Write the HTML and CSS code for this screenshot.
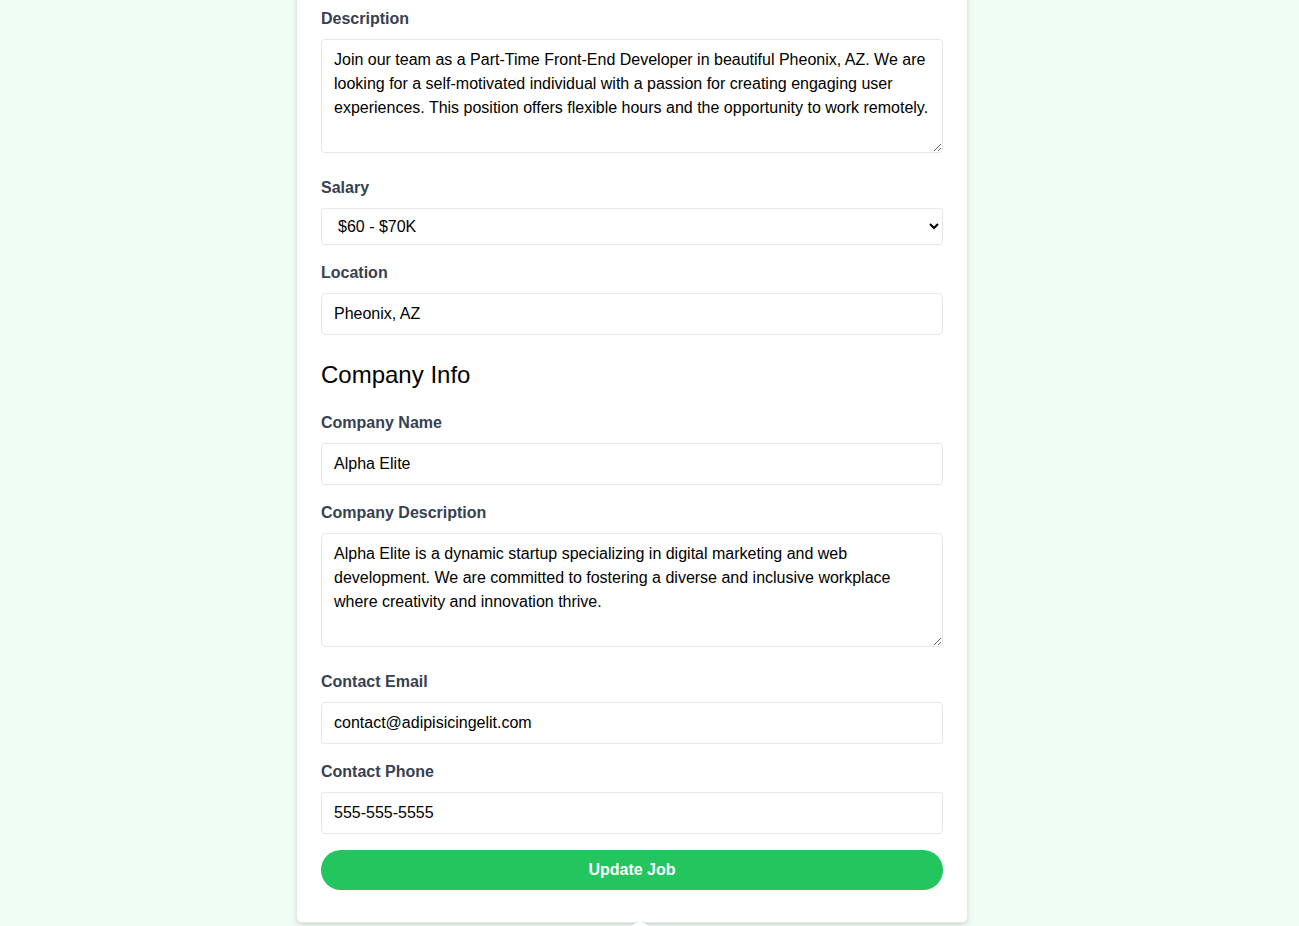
FILE: index.html
```html
<!DOCTYPE html>
<html lang="en">
<head>
<meta charset="utf-8">
<title>Edit Job</title>
<link rel="stylesheet" href="styles.css">
</head>
<body>
<div class="page">
  <div class="card">
    <form class="form">
      <div class="field field-tall">
        <label class="label" for="description">Description</label>
        <textarea id="description" class="control area" rows="4">Join our team as a Part-Time Front-End Developer in beautiful Pheonix, AZ. We are looking for a self-motivated individual with a passion for creating engaging user experiences. This position offers flexible hours and the opportunity to work remotely.</textarea>
      </div>
      <div class="field">
        <label class="label" for="salary">Salary</label>
        <select id="salary" class="control select">
          <option>Under $50K</option>
          <option selected>$60 - $70K</option>
          <option>$70K - $80K</option>
        </select>
      </div>
      <div class="field">
        <label class="label" for="location">Location</label>
        <input id="location" class="control" type="text" value="Pheonix, AZ">
      </div>

      <h3 class="section-title">Company Info</h3>

      <div class="field">
        <label class="label" for="company">Company Name</label>
        <input id="company" class="control" type="text" value="Alpha Elite">
      </div>
      <div class="field field-tall">
        <label class="label" for="company_description">Company Description</label>
        <textarea id="company_description" class="control area" rows="4">Alpha Elite is a dynamic startup specializing in digital marketing and web development. We are committed to fostering a diverse and inclusive workplace where creativity and innovation thrive.</textarea>
      </div>
      <div class="field">
        <label class="label" for="contact_email">Contact Email</label>
        <input id="contact_email" class="control" type="email" value="contact@adipisicingelit.com">
      </div>
      <div class="field">
        <label class="label" for="contact_phone">Contact Phone</label>
        <input id="contact_phone" class="control" type="tel" value="555-555-5555">
      </div>
      <button class="submit" type="button">Update Job</button>
    </form>
  </div>
  <div class="dot"></div>
</div>
</body>
</html>
```

FILE: styles.css
```css
* {
  box-sizing: border-box;
}

html, body {
  margin: 0;
  padding: 0;
  background: #f0fdf4;
  font-family: "Liberation Sans", Arial, sans-serif;
  overflow: hidden;
  height: 926px;
}

.page {
  padding-left: 296px;
}

.card {
  width: 672px;
  margin-top: -25px;
  background: #ffffff;
  border: 1px solid #e5e7eb;
  border-radius: 6px;
  box-shadow: 0 4px 6px -1px rgba(0, 0, 0, 0.1), 0 2px 4px -2px rgba(0, 0, 0, 0.1);
  padding: 31px 24px 32px 24px;
}

.form {
  margin: 0;
}

.field {
  margin-bottom: 16px;
}

.field-tall {
  margin-bottom: 23px;
}

.label {
  display: block;
  color: #374151;
  font-weight: 700;
  font-size: 16px;
  line-height: 24px;
  margin-bottom: 8px;
}

.control {
  display: block;
  width: 100%;
  border: 1px solid #e5e7eb;
  border-radius: 4px;
  padding: 8px 12px;
  font-family: "Liberation Sans", Arial, sans-serif;
  font-size: 16px;
  line-height: 24px;
  color: #000000;
  background: #ffffff;
  margin: 0;
}

.area {
  height: 114px;
}

.select {
  height: 37px;
  padding: 0 8px 0 12px;
  line-height: 20px;
}

.section-title {
  font-size: 24px;
  line-height: 32px;
  font-weight: 400;
  color: #000000;
  margin: 24px 0 20px 0;
}

.submit {
  display: block;
  width: 100%;
  height: 40px;
  border: none;
  border-radius: 9999px;
  background: #22c55e;
  color: #ffffff;
  font-family: "Liberation Sans", Arial, sans-serif;
  font-size: 16px;
  font-weight: 700;
  line-height: 24px;
  padding: 8px 16px;
}

.dot {
  width: 20px;
  height: 20px;
  border-radius: 50%;
  background: #ffffff;
  margin-left: 334px;
  margin-top: -1px;
}
```
